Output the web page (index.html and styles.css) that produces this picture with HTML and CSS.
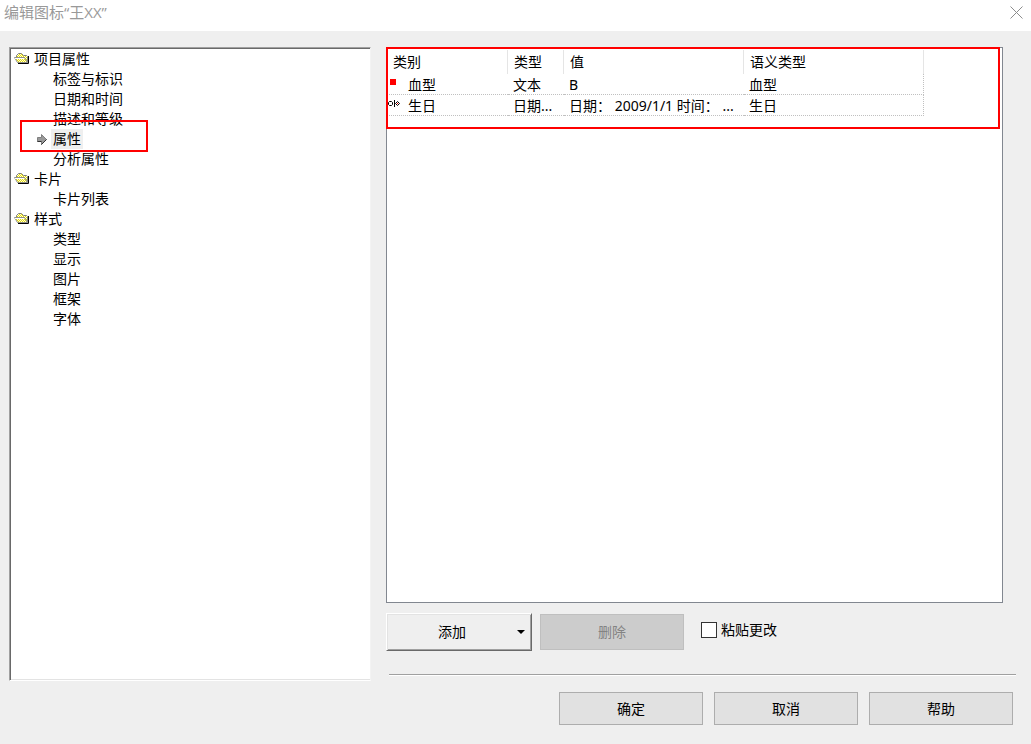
FILE: index.html
```html
<!DOCTYPE html>
<html lang="zh-CN">
<head>
  <meta charset="UTF-8" />
  <meta name="viewport" content="width=device-width, initial-scale=1.0" />
  <title>编辑图标“王XX”</title>
  <link rel="stylesheet" href="styles.css">
</head>
<body>
  <svg width="0" height="0" class="defs" aria-hidden="true">
    <defs>
      <pattern id="dither" width="2" height="2" patternUnits="userSpaceOnUse">
        <rect width="2" height="2" fill="#fffce0" />
        <rect width="1" height="1" fill="#e8e000" />
        <rect x="1" y="1" width="1" height="1" fill="#e8e000" />
      </pattern>
      <symbol id="folder" viewBox="0 0 16 12">
        <path d="M2.5 4.5V2.5L4.5 0.5H7.5L9.5 2.5H12.5L13.5 3.5V9.5" fill="url(#dither)" stroke="#808080" />
        <path d="M0.5 4.5H10.5L13.5 9.5H3.5Z" fill="url(#dither)" stroke="#909090" />
        <path d="M1 5.5H10" stroke="#fff" />
        <path d="M14.5 3V10.5H4" fill="none" stroke="#000" />
      </symbol>
    </defs>
  </svg>
  <header class="titlebar">
    <h1>编辑图标“王XX”</h1>
    <button class="close" aria-label="关闭">
      <svg width="13" height="13" viewBox="0 0 13 13"><path d="M0.5 0.5L12.5 12.5M12.5 0.5L0.5 12.5" stroke="#8c8c8c" /></svg>
    </button>
  </header>
  <main class="dialog">
    <nav class="tree">
      <section>
        <h2><svg class="folder"><use href="#folder" /></svg>项目属性</h2>
        <ul>
          <li><a href="#">标签与标识</a></li>
          <li><a href="#">日期和时间</a></li>
          <li><a href="#">描述和等级</a></li>
          <li class="active">
            <svg class="arrow" viewBox="0 0 10 11"><path d="M0.5 3.5H4.5V0.5L9.5 5.5L4.5 10.5V7.5H0.5Z" fill="#999" stroke="#808080" /><path d="M4.5 10.5L9.5 5.5M0.5 7.5H4.5" stroke="#333" /></svg>
            <a href="#">属性</a>
            <span class="mark"></span>
          </li>
          <li><a href="#">分析属性</a></li>
        </ul>
      </section>
      <section>
        <h2><svg class="folder"><use href="#folder" /></svg>卡片</h2>
        <ul>
          <li><a href="#">卡片列表</a></li>
        </ul>
      </section>
      <section>
        <h2><svg class="folder"><use href="#folder" /></svg>样式</h2>
        <ul>
          <li><a href="#">类型</a></li>
          <li><a href="#">显示</a></li>
          <li><a href="#">图片</a></li>
          <li><a href="#">框架</a></li>
          <li><a href="#">字体</a></li>
        </ul>
      </section>
    </nav>
    <div class="panel">
      <div class="list">
        <table>
          <colgroup>
            <col class="col-name"><col class="col-type"><col class="col-value"><col class="col-semantic">
          </colgroup>
          <thead>
            <tr><th>类别</th><th>类型</th><th>值</th><th>语义类型</th></tr>
          </thead>
          <tbody>
            <tr>
              <td><svg class="row-icon" viewBox="0 0 12 12"><rect x="2" y="2" width="6" height="6" fill="#f00" /></svg>血型</td>
              <td>文本</td>
              <td>B</td>
              <td>血型</td>
            </tr>
            <tr>
              <td><svg class="row-icon" viewBox="0 0 12 12"><path d="M1.5 3.5H3.5L4.5 4.5V6.5L3.5 7.5H1.5L0.5 6.5V4.5ZM6.5 2V9M9.5 3.5L11.5 5.5L9.5 7.5L7.5 5.5Z" fill="none" stroke="#000" /><rect x="9" y="5" width="1" height="1" fill="#f00" /></svg>生日</td>
              <td>日期...</td>
              <td>日期： 2009/1/1 时间： ...</td>
              <td>生日</td>
            </tr>
          </tbody>
        </table>
        <span class="mark"></span>
      </div>
      <div class="tools">
        <button class="add"><span>添加</span><svg width="8" height="4" viewBox="0 0 8 4"><path d="M0 0H8L4 4Z" /></svg></button>
        <button class="delete" disabled>删除</button>
        <label><input type="checkbox">粘贴更改</label>
      </div>
      <footer>
        <button>确定</button>
        <button>取消</button>
        <button>帮助</button>
      </footer>
    </div>
  </main>
</body>
</html>
```
FILE: styles.css
```css
* {
  box-sizing: border-box;
}
body {
  margin: 0;
  min-height: 100vh;
  display: flex;
  flex-direction: column;
  background: #efefef;
  color: #000;
  font-family: "Noto Sans", "Noto Sans CJK SC", sans-serif;
  font-size: 14px;
  line-height: 20px;
}
button, input {
  font: inherit;
  margin: 0;
}
a {
  color: inherit;
  text-decoration: none;
}
.defs {
  position: absolute;
}
.titlebar {
  display: flex;
  justify-content: space-between;
  align-items: flex-start;
  height: 31px;
  padding: 2px 8px 0 4px;
  background: #fff;
}
.titlebar h1 {
  margin: 0;
  font-family: "Open Sans", "Noto Sans CJK SC", sans-serif;
  font-size: 15px;
  font-weight: 400;
  color: #999;
}
.close {
  padding: 4px 0 0;
  border: 0;
  background: none;
  line-height: 0;
}
.dialog {
  flex: 1;
  display: flex;
  gap: 15px;
  padding: 16px 15px 19px 9px;
}
.tree {
  flex: 0 0 362px;
  margin-bottom: 44px;
  padding: 1px 0 0 4px;
  background: #fff;
  border: 1px solid #a0a0a0;
  border-right-color: #f3f3f3;
  border-bottom-color: #fff;
  box-shadow: inset 1px 1px #696969, inset 0 -1px #e3e3e3;
}
.tree h2 {
  display: flex;
  align-items: center;
  gap: 4px;
  margin: 0;
  font-size: 14px;
  font-weight: 400;
}
.tree ul {
  margin: 0;
  padding: 0 0 0 37px;
  list-style: none;
}
.tree li {
  position: relative;
  height: 20px;
}
.tree a {
  display: inline-block;
  padding: 0 2px;
}
.tree .active a {
  background: #efefef;
}
.folder {
  width: 16px;
  height: 12px;
}
.arrow {
  position: absolute;
  top: 5px;
  left: -14px;
  width: 10px;
  height: 11px;
}
.mark {
  position: absolute;
  border: 2px solid #f00;
  pointer-events: none;
}
.tree .mark {
  top: -9px;
  left: -31px;
  width: 128px;
  height: 32px;
}
.panel {
  flex: 1;
  min-width: 0;
  display: flex;
  flex-direction: column;
}
.list {
  position: relative;
  flex: 1;
  margin-right: 13px;
  padding: 2px 0 0;
  background: #fff;
  border: 1px solid #828790;
}
.list .mark {
  top: -1px;
  left: -1px;
  right: 2px;
  height: 82px;
}
table {
  width: 537px;
  table-layout: fixed;
  border-collapse: separate;
  border-spacing: 0;
}
.col-name {
  width: 121px;
}
.col-type {
  width: 56px;
}
.col-value {
  width: 180px;
}
.col-semantic {
  width: 180px;
}
th, td {
  padding: 0 0 0 5px;
  text-align: left;
  font-weight: 400;
  white-space: nowrap;
}
th {
  height: 24px;
  padding-left: 6px;
  border-right: 1px solid #e5e5e5;
}
td {
  height: 21px;
  padding-top: 2px;
  line-height: 18px;
  border-bottom: 1px dotted #c0c0c0;
}
td:first-child {
  padding-left: 1px;
}
td:last-child {
  border-right: 1px dotted #c0c0c0;
}
.row-icon {
  width: 12px;
  height: 12px;
  margin-right: 8px;
  vertical-align: 1px;
}
.tools {
  display: flex;
  align-items: center;
  gap: 8px;
  height: 58px;
}
.add {
  display: flex;
  align-items: center;
  width: 146px;
  height: 38px;
  padding: 0 6px 0 0;
  background: #efefef;
  border: 1px solid #fff;
  border-right-color: #696969;
  border-bottom-color: #696969;
  box-shadow: inset 1px 1px #e3e3e3, inset -1px -1px #a0a0a0;
}
.add span {
  flex: 1;
}
.delete, footer button {
  width: 144px;
  height: 36px;
  padding: 0;
  border: 1px solid #bfbfbf;
  background: #ccc;
  color: #838383;
}
.tools label {
  display: flex;
  align-items: center;
  gap: 4px;
  margin: 0 0 4px 9px;
}
.tools input {
  appearance: none;
  width: 16px;
  height: 16px;
  background: #fff;
  border: 1px solid #333;
}
.tools input:checked {
  background: #333;
  box-shadow: inset 0 0 0 3px #fff;
}
footer {
  display: flex;
  justify-content: flex-end;
  gap: 11px;
  margin: 13px 0 0 3px;
  padding: 17px 3px 0 0;
  border-top: 1px solid #a0a0a0;
  box-shadow: inset 0 1px #fff;
}
footer button {
  height: 33px;
  background: #e1e1e1;
  border-color: #adadad;
  color: #000;
}
```
